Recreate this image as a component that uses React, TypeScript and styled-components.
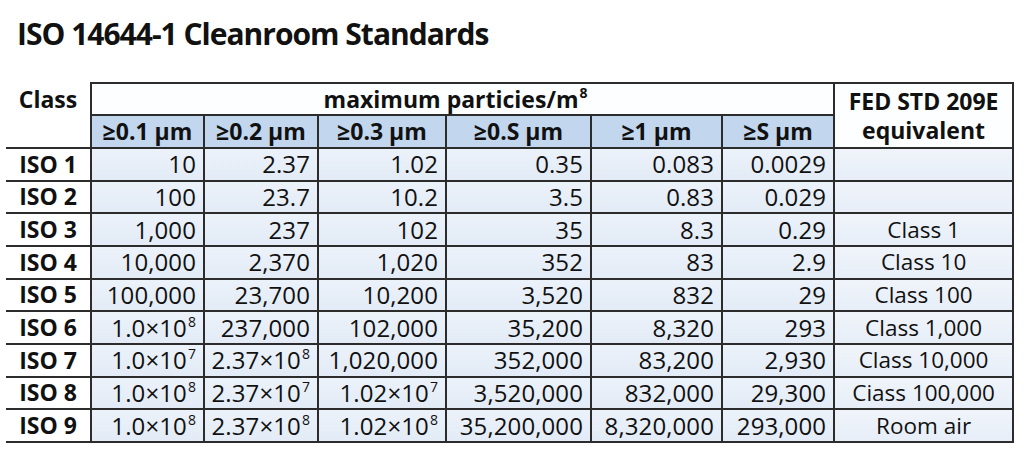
import React from 'react';
import styled, { createGlobalStyle } from 'styled-components';

type Cell = string | { base: string; exp: string };

const sizes = ['≥0.1 µm', '≥0.2 µm', '≥0.3 µm', '≥0.S µm', '≥1 µm', '≥S µm'];
const colWidths = [85, 113, 114, 128, 145, 131, 112, 179];

const sci = (base: string, exp: string): Cell => ({ base, exp });

const rows: { label: string; values: Cell[]; fed: string }[] = [
  { label: 'ISO 1', values: ['10', '2.37', '1.02', '0.35', '0.083', '0.0029'], fed: '' },
  { label: 'ISO 2', values: ['100', '23.7', '10.2', '3.5', '0.83', '0.029'], fed: '' },
  { label: 'ISO 3', values: ['1,000', '237', '102', '35', '8.3', '0.29'], fed: 'Class 1' },
  { label: 'ISO 4', values: ['10,000', '2,370', '1,020', '352', '83', '2.9'], fed: 'Class 10' },
  { label: 'ISO 5', values: ['100,000', '23,700', '10,200', '3,520', '832', '29'], fed: 'Class 100' },
  { label: 'ISO 6', values: [sci('1.0', '8'), '237,000', '102,000', '35,200', '8,320', '293'], fed: 'Class 1,000' },
  { label: 'ISO 7', values: [sci('1.0', '7'), sci('2.37', '8'), '1,020,000', '352,000', '83,200', '2,930'], fed: 'Class 10,000' },
  { label: 'ISO 8', values: [sci('1.0', '8'), sci('2.37', '7'), sci('1.02', '7'), '3,520,000', '832,000', '29,300'], fed: 'Ciass 100,000' },
  { label: 'ISO 9', values: [sci('1.0', '8'), sci('2.37', '8'), sci('1.02', '8'), '35,200,000', '8,320,000', '293,000'], fed: 'Room air' },
];

const renderCell = (cell: Cell) =>
  typeof cell === 'string' ? (
    cell
  ) : (
    <>
      {cell.base}×10<Sup>{cell.exp}</Sup>
    </>
  );

const App: React.FC = () => (
  <>
    <GlobalStyle />
    <Page>
      <Title>ISO 14644-1 Cleanroom Standards</Title>
      <Table>
        <colgroup>
          {colWidths.map((w, i) => (
            <Col key={i} $width={w} />
          ))}
        </colgroup>
        <thead>
          <HeadRow $height={32}>
            <ClassHead rowSpan={2}>Class</ClassHead>
            <GroupHead colSpan={6}>
              maximum particies/m<Sup>8</Sup>
            </GroupHead>
            <FedHead rowSpan={2}>
              FED STD 209E
              <br />
              equivalent
            </FedHead>
          </HeadRow>
          <HeadRow $height={33}>
            {sizes.map((s) => (
              <SizeHead key={s}>{s}</SizeHead>
            ))}
          </HeadRow>
        </thead>
        <tbody>
          {rows.map((row) => (
            <Row key={row.label}>
              <RowLabel scope="row">{row.label}</RowLabel>
              {row.values.map((v, i) => (
                <Value key={i}>{renderCell(v)}</Value>
              ))}
              <Fed>{row.fed}</Fed>
            </Row>
          ))}
        </tbody>
      </Table>
    </Page>
  </>
);

export default App;

const line = '2px solid #2c2c2c';

const GlobalStyle = createGlobalStyle`
  html, body {
    margin: 0;
    padding: 0;
    background: #ffffff;
  }
  body {
    font-family: 'Open Sans', 'Noto Sans', sans-serif;
    color: #111;
  }
`;

const Page = styled.main`
  width: 1024px;
  height: 455px;
  box-sizing: border-box;
  padding: 18px 11px 0 6px;
  overflow: hidden;
`;

const Title = styled.h1`
  margin: 0 0 0 11px;
  font-size: 30px;
  line-height: 31px;
  font-weight: 700;
  letter-spacing: -1px;
  color: #111;
`;

const Table = styled.table`
  margin-top: 33px;
  width: 1007px;
  border-collapse: collapse;
  table-layout: fixed;
`;

const Col = styled.col<{ $width: number }>`
  width: ${(p) => p.$width}px;
`;

const HeadRow = styled.tr<{ $height: number }>`
  height: ${(p) => p.$height}px;
`;

const Row = styled.tr`
  height: 32.67px;
`;

const HeadCell = styled.th`
  padding: 0;
  font-size: 23px;
  font-weight: 700;
  line-height: 29px;
  text-align: center;
  white-space: nowrap;
`;

const ClassHead = styled(HeadCell)`
  vertical-align: top;
  padding-top: 2px;
  border-bottom: ${line};
  border-right: ${line};
`;

const GroupHead = styled(HeadCell)`
  border: ${line};
  background: #fdfeff;
  padding-right: 14px;
`;

const FedHead = styled(HeadCell)`
  border: ${line};
  background: #fdfeff;
  line-height: 29px;
`;

const SizeHead = styled(HeadCell)`
  border: ${line};
  background: #c2d6ee;
`;

const RowLabel = styled(HeadCell)`
  border-bottom: ${line};
  border-right: ${line};
  background: #ffffff;
`;

const Value = styled.td`
  padding: 0 7px 0 0;
  border: ${line};
  background: linear-gradient(180deg, #ecf2fa 0%, #e2ebf6 100%);
  font-size: 24px;
  font-weight: 500;
  line-height: 28px;
  letter-spacing: 0.1px;
  text-align: right;
  white-space: nowrap;
`;

const Fed = styled(Value)`
  padding: 0;
  font-size: 22.5px;
  letter-spacing: 0;
  text-align: center;
  background: linear-gradient(180deg, #f0f4fa 0%, #e7eef8 100%);
`;

const Sup = styled.sup`
  font-size: 14px;
  line-height: 0;
  vertical-align: 10px;
  margin-left: 1px;
`;
